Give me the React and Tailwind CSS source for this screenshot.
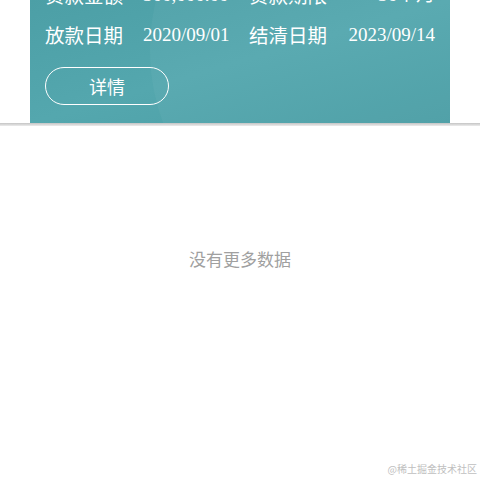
const rows = [
  [
    { label: "贷款金额", value: "300,000.00" },
    { label: "贷款期限", value: "36个月" },
  ],
  [
    { label: "放款日期", value: "2020/09/01" },
    { label: "结清日期", value: "2023/09/14" },
  ],
];

const cjk = { fontFamily: '"Noto Sans CJK SC", "Noto Sans", sans-serif' };
const serif = { fontFamily: '"Liberation Serif", "Noto Sans CJK SC", serif' };

export default function App() {
  return (
    <div className="w-[480px] h-[480px] bg-white overflow-hidden flex flex-col relative">
      {/* Card */}
      <div className="px-[30px]">
        <div className="relative overflow-hidden bg-gradient-to-br from-[#4c9fa6] via-[#54a7ae] to-[#4a9ea5] border-b-[3px] border-[#3f8c92] px-[15px] pt-0 pb-[18px]">
          <div className="absolute -right-[120px] -top-[160px] w-[420px] h-[420px] rounded-full bg-white/[0.04]"></div>
          <div className="relative mt-[-19px] flex flex-col gap-[12px] text-white">
            {rows.map((row, i) => (
              <div key={i} className="flex items-center h-[28px]">
                <span className="text-[19.5px] leading-[28px] w-[98px] shrink-0" style={cjk}>
                  {row[0].label}
                </span>
                <span className="text-[19px] leading-[28px] w-[106px] shrink-0 whitespace-nowrap" style={serif}>
                  {row[0].value}
                </span>
                <span className="text-[19.5px] leading-[28px] w-[97px] shrink-0" style={cjk}>
                  {row[1].label}
                </span>
                <span className="text-[19px] leading-[28px] flex-1 text-right whitespace-nowrap" style={serif}>
                  {row[1].value}
                </span>
              </div>
            ))}
          </div>
          <button
            className="relative mt-[18px] w-[124px] h-[38px] rounded-full border border-white text-white text-[18px] flex items-center justify-center"
            style={cjk}
          >
            详情
          </button>
        </div>
      </div>
      <div className="h-[3px] -mt-[3px] bg-gradient-to-b from-[#c4c4c4] to-[#ececec] relative"></div>

      {/* Empty state */}
      <div className="flex-1 flex justify-center pt-[121px]">
        <span className="text-[17px] text-[#a0a0a0] leading-[24px] h-fit" style={cjk}>
          没有更多数据
        </span>
      </div>

      <div className="absolute right-[3px] bottom-[4px] text-[10px] text-[#c0c0c0]" style={cjk}>
        @稀土掘金技术社区
      </div>
    </div>
  );
}
